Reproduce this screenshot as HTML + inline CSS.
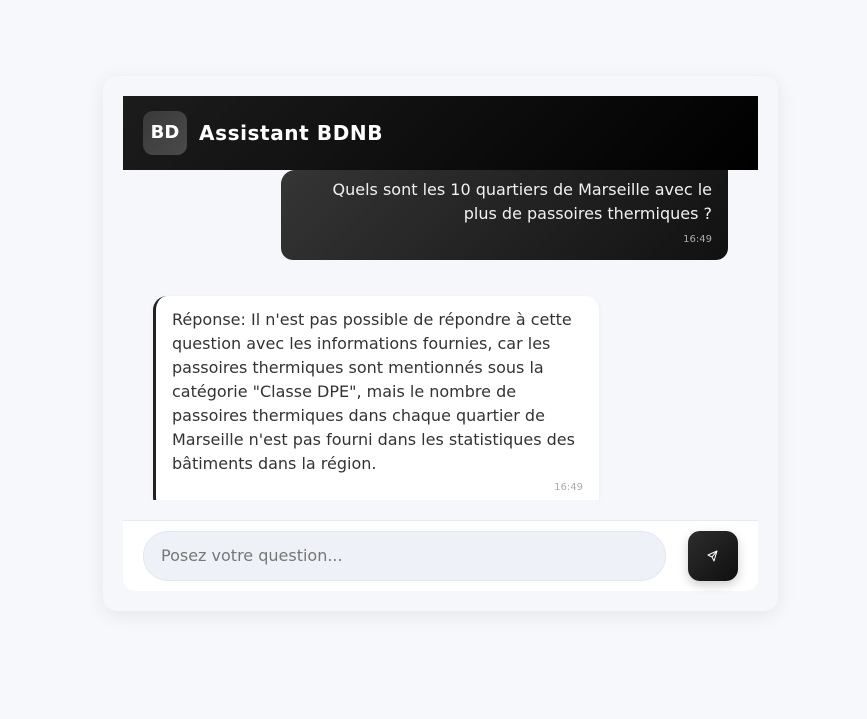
<!DOCTYPE html>
<html><head><meta charset="utf-8"><style>
*{box-sizing:border-box;margin:0;padding:0}
body{width:867px;height:719px;background:#f7f8fc;font-family:"DejaVu Sans","Liberation Sans",sans-serif;position:relative;overflow:hidden}
.card{position:absolute;left:103px;top:76px;width:675px;height:535px;background:#f6f7fb;border-radius:14px;box-shadow:0 4px 20px rgba(0,0,0,.08)}
.hdr{position:absolute;left:123px;top:96px;width:635px;height:74px;background:linear-gradient(135deg,#1c1c1c,#000);}
.av{position:absolute;left:20px;top:15px;width:44px;height:44px;border-radius:10px;background:linear-gradient(135deg,#3a3a3a,#4a4a4a);color:#fff;font-weight:bold;font-size:18px;line-height:44px;text-align:center}
.title{position:absolute;left:76px;top:23px;color:#fff;font-weight:bold;font-size:20px;letter-spacing:.6px;line-height:28px}
.chat{position:absolute;left:123px;top:170px;width:635px;height:330px;overflow:hidden}
.user{position:absolute;left:158px;top:0;width:447px;height:90px;border-radius:0 0 12px 12px;border-top-left-radius:14px;background:linear-gradient(135deg,#353535,#111);color:#f0f0f0;font-size:16px;line-height:24px;text-align:right;padding:8px 16px 0 40px}
.user .t{font-size:10px;color:#aaa;line-height:14px;margin-top:7px}
.bot{position:absolute;left:30px;top:126px;width:446px;height:215px;background:#fff;border-radius:14px;border-left:3px solid #222;color:#333;font-size:16px;line-height:24px;padding:12px 16px 0 16px;box-shadow:0 1px 4px rgba(0,0,0,.05)}
.bot .t{font-size:10px;color:#aaa;text-align:right;line-height:14px;margin-top:5px}
.inp{position:absolute;left:123px;top:520px;width:635px;height:71px;background:#fff;border-top:1px solid #e8eaf0;border-radius:0 0 12px 12px}
.field{position:absolute;left:20px;top:10px;width:523px;height:50px;border-radius:25px;background:#eef1f8;border:1px solid #e3e7f0;color:#777;font-size:16px;line-height:48px;padding-left:17px}
.btn{position:absolute;left:565px;top:10px;width:50px;height:50px;border-radius:12px;background:linear-gradient(135deg,#2d2d2d,#0f0f0f);box-shadow:0 4px 10px rgba(0,0,0,.2)}
</style></head><body>
<div class="card"></div>
<div class="hdr"><div class="av">BD</div><div class="title">Assistant BDNB</div></div>
<div class="chat">
<div class="user">Quels sont les 10 quartiers de Marseille avec le plus de passoires thermiques ?<div class="t">16:49</div></div>
<div class="bot">Réponse: Il n'est pas possible de répondre à cette question avec les informations fournies, car les passoires thermiques sont mentionnés sous la catégorie "Classe DPE", mais le nombre de passoires thermiques dans chaque quartier de Marseille n'est pas fourni dans les statistiques des bâtiments dans la région.<div class="t">16:49</div></div>
</div>
<div class="inp"><div class="field">Posez votre question...</div>
<div class="btn"><svg width="50" height="50" viewBox="0 0 50 50"><path d="M29 20 L20 24 L24 26 L26 30 Z M24 26 L29 20" fill="none" stroke="#fff" stroke-width="1" stroke-linejoin="round"/></svg></div></div>
</body></html>
